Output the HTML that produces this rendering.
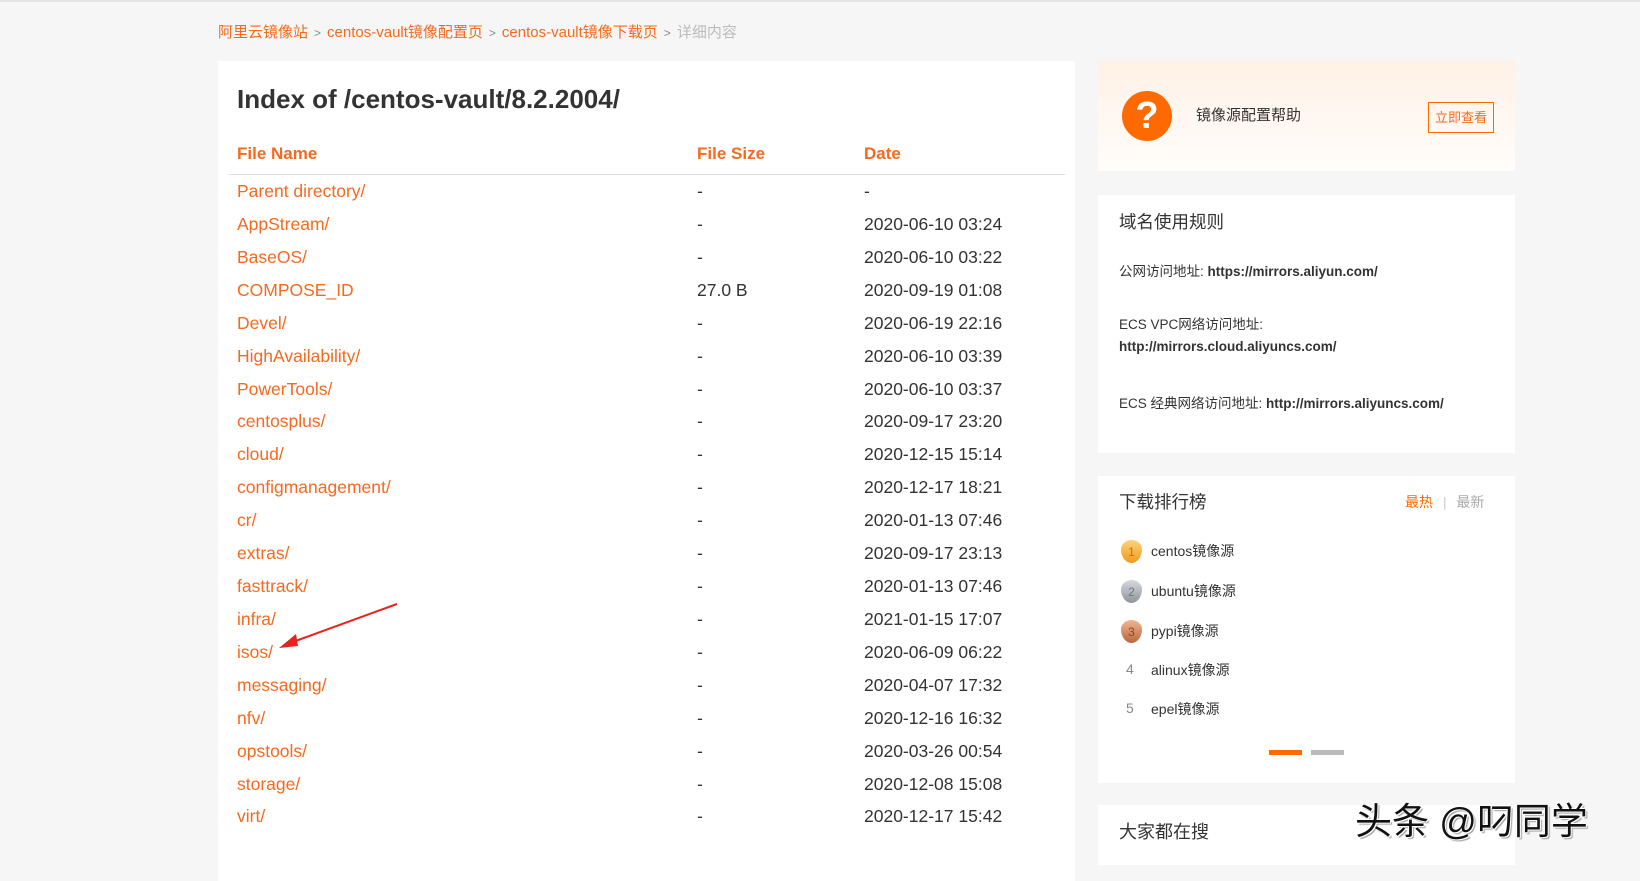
<!DOCTYPE html>
<html><head><meta charset="utf-8"><style>
*{margin:0;padding:0;box-sizing:border-box}
body{width:1640px;height:859px;overflow:hidden;background:#f6f6f6;font-family:"Liberation Sans","Noto Sans CJK SC",sans-serif;position:relative;border-top:2px solid #e4e4e4}
.a{position:absolute;white-space:nowrap}
.or{color:#f7691e}
.card{position:absolute;background:#fff}
.row{position:absolute;font-size:17.5px;line-height:20px}
.sep{color:#888;font-size:12px;margin:0 6px}
</style></head><body>
<div class="a" style="left:218px;top:19px;font-size:15px;color:#f7691e">阿里云镜像站<span class="sep">&gt;</span>centos-vault镜像配置页<span class="sep">&gt;</span>centos-vault镜像下载页<span class="sep">&gt;</span><span style="color:#bbb">详细内容</span></div>

<div class="card" style="left:218px;top:59px;width:857px;height:820px"></div>
<div class="a" style="left:237px;top:82px;font-size:26px;font-weight:bold;color:#333">Index of /centos-vault/8.2.2004/</div>
<div class="a or" style="left:237px;top:142px;font-size:17px;font-weight:bold">File Name</div>
<div class="a or" style="left:697px;top:142px;font-size:17px;font-weight:bold">File Size</div>
<div class="a or" style="left:864px;top:142px;font-size:17px;font-weight:bold">Date</div>
<div class="a" style="left:229px;top:172px;width:836px;height:1px;background:#ddd"></div>
<div id="rows"></div>

<div class="card" style="left:1098px;top:59px;width:417px;height:110px;background:linear-gradient(#fff1e6,#fffdfb)"></div>
<div class="a" style="left:1122px;top:89px;width:50px;height:50px;border-radius:50%;background:#ff6a00;color:#fff;font-weight:bold;font-size:38px;line-height:50px;text-align:center">?</div>
<div class="a" style="left:1196px;top:102px;font-size:15px;color:#333">镜像源配置帮助</div>
<div class="a or" style="left:1428px;top:100px;width:66px;height:31px;border:1px solid #ff6a00;font-size:13px;line-height:29px;text-align:center">立即查看</div>

<div class="card" style="left:1098px;top:193px;width:417px;height:258px"></div>
<div class="a" style="left:1119px;top:207px;font-size:17.5px;color:#333">域名使用规则</div>
<div class="a" style="left:1119px;top:258px;font-size:13.5px;color:#333">公网访问地址: <b>https://mirrors.aliyun.com/</b></div>
<div class="a" style="left:1119px;top:311px;font-size:13.5px;color:#333">ECS VPC网络访问地址:</div>
<div class="a" style="left:1119px;top:337px;font-size:13.5px;color:#333"><b>http://mirrors.cloud.aliyuncs.com/</b></div>
<div class="a" style="left:1119px;top:390px;font-size:13.5px;color:#333">ECS 经典网络访问地址: <b>http://mirrors.aliyuncs.com/</b></div>

<div class="card" style="left:1098px;top:474px;width:417px;height:307px"></div>
<div class="a" style="left:1119px;top:487px;font-size:17.5px;color:#333">下载排行榜</div>
<div class="a" style="left:1405px;top:490px;font-size:14px;color:#ff6a00">最热 <span style="color:#ccc;margin:0 6px">|</span> <span style="color:#aaa">最新</span></div>
<div class="a" style="left:1121px;top:538px;width:21px;height:23px;border-radius:50%/40% 40% 60% 60%;background:linear-gradient(#fcd27a,#f29a1d);color:#c76f00;font-size:12px;text-align:center;line-height:25px">1</div>
<div class="a" style="left:1121px;top:578px;width:21px;height:23px;border-radius:50%/40% 40% 60% 60%;background:linear-gradient(#d6d9df,#8f949c);color:#777;font-size:12px;text-align:center;line-height:25px">2</div>
<div class="a" style="left:1121px;top:618px;width:21px;height:23px;border-radius:50%/40% 40% 60% 60%;background:linear-gradient(#f0b690,#b8673d);color:#8a4a25;font-size:12px;text-align:center;line-height:25px">3</div>
<div class="a" style="left:1126px;top:659px;font-size:14px;color:#888">4</div>
<div class="a" style="left:1126px;top:698px;font-size:14px;color:#888">5</div>
<div class="a" style="left:1151px;top:539px;font-size:14px;color:#333">centos镜像源</div>
<div class="a" style="left:1151px;top:579px;font-size:14px;color:#333">ubuntu镜像源</div>
<div class="a" style="left:1151px;top:619px;font-size:14px;color:#333">pypi镜像源</div>
<div class="a" style="left:1151px;top:658px;font-size:14px;color:#333">alinux镜像源</div>
<div class="a" style="left:1151px;top:697px;font-size:14px;color:#333">epel镜像源</div>
<div class="a" style="left:1269px;top:748px;width:33px;height:5px;background:#ff6a00"></div>
<div class="a" style="left:1311px;top:748px;width:33px;height:5px;background:#bbb"></div>

<div class="card" style="left:1098px;top:803px;width:417px;height:60px"></div>
<div class="a" style="left:1119px;top:816px;font-size:18px;color:#333">大家都在搜</div>

<div class="a" style="left:1355px;top:789px;font-size:37px;color:#111;text-shadow:0 0 2px #fff,1px 1px 0 #fff,-1px -1px 0 #fff,2px 2px 1px #999">头条 @叼同学</div>

<svg class="a" style="left:0;top:0" width="1640" height="859"><line x1="397" y1="602" x2="290" y2="641" stroke="#e8231b" stroke-width="2"/><polygon points="279,646 296,632 298,644" fill="#e8231b"/></svg>

<script>
var d=[["Parent directory/","-","-"],["AppStream/","-","2020-06-10 03:24"],["BaseOS/","-","2020-06-10 03:22"],["COMPOSE_ID","27.0 B","2020-09-19 01:08"],["Devel/","-","2020-06-19 22:16"],["HighAvailability/","-","2020-06-10 03:39"],["PowerTools/","-","2020-06-10 03:37"],["centosplus/","-","2020-09-17 23:20"],["cloud/","-","2020-12-15 15:14"],["configmanagement/","-","2020-12-17 18:21"],["cr/","-","2020-01-13 07:46"],["extras/","-","2020-09-17 23:13"],["fasttrack/","-","2020-01-13 07:46"],["infra/","-","2021-01-15 17:07"],["isos/","-","2020-06-09 06:22"],["messaging/","-","2020-04-07 17:32"],["nfv/","-","2020-12-16 16:32"],["opstools/","-","2020-03-26 00:54"],["storage/","-","2020-12-08 15:08"],["virt/","-","2020-12-17 15:42"]];
var h="";d.forEach(function(r,i){var y=179+i*32.92;h+='<div class="row or" style="left:237px;top:'+y+'px">'+r[0]+'</div><div class="row" style="left:697px;top:'+y+'px;color:#333">'+r[1]+'</div><div class="row" style="left:864px;top:'+y+'px;color:#333">'+r[2]+'</div>';});
document.getElementById("rows").innerHTML=h;
</script>
</body></html>
